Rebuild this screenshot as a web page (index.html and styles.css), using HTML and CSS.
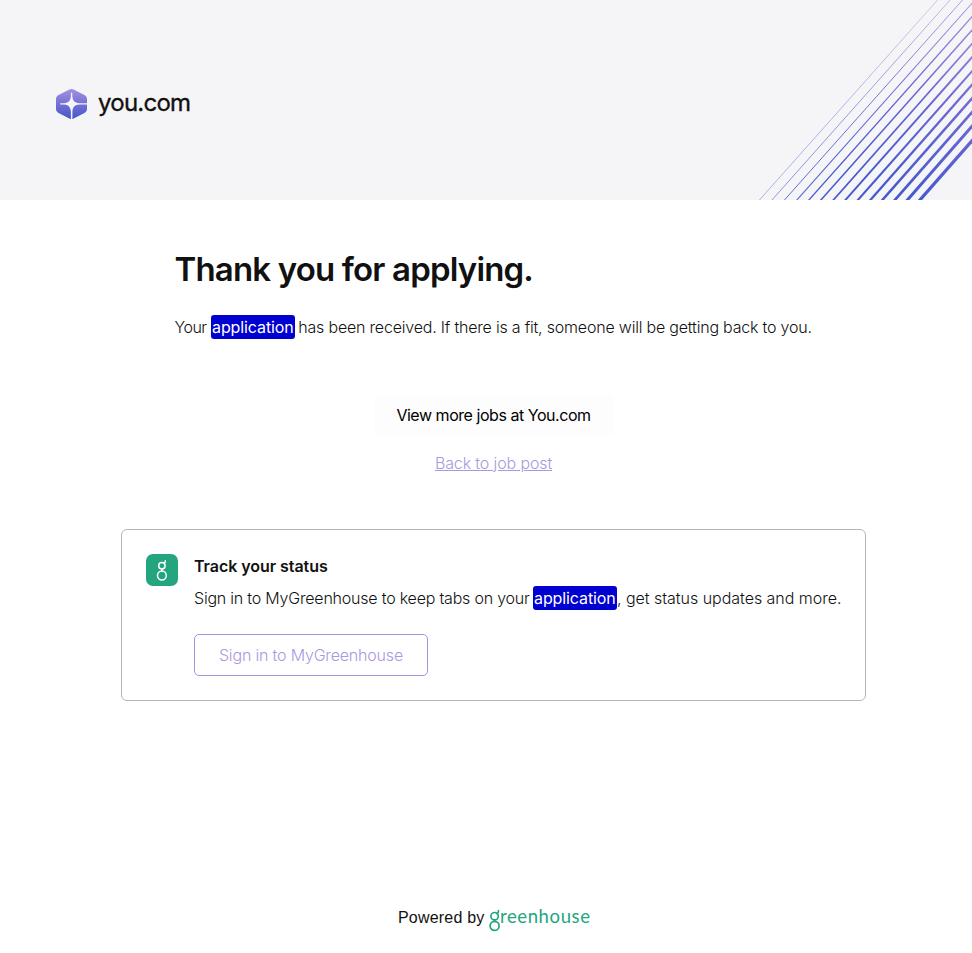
FILE: index.html
```html
<!DOCTYPE html>
<html lang="en">
<head>
<meta charset="utf-8">
<title>Thank you for applying</title>
<link rel="stylesheet" href="styles.css">
</head>
<body>
<header class="banner">
  <div class="brand">
    <svg class="brand-mark" width="32" height="32" viewBox="0 0 32 32">
      <defs><linearGradient id="mark" x1="0" y1="0" x2="0" y2="1"><stop offset="0" stop-color="#a292e0"/><stop offset=".5" stop-color="#7670d4"/><stop offset="1" stop-color="#4358cb"/></linearGradient></defs>
      <path fill="url(#mark)" d="M13.300 1.500Q15.500 .3 17.700 1.500L28.900 7.300Q31 8.400 31 10.800V21.300Q31 23.700 28.900 24.800L17.700 30.400Q15.500 31.500 13.300 30.400L2.100 24.800Q0 23.700 0 21.300V10.800Q0 8.400 2.100 7.300Z"/>
      <path fill="#f5f5f8" d="M14.900 5Q15.600 3.800 16.300 5V8C16.500 12.500 18.500 15 23.500 15.200H31.300V16.600H23.500C18.500 16.800 16.500 19.500 16.400 24V31.800H14.900V24C14.700 19.500 12.500 16.800 8 16.600H4.500Q3.500 15.900 4.500 15.200H8C12.500 15 14.700 12.500 14.900 8Z"/>
    </svg>
    <span class="brand-name">you.com</span>
  </div>
  <svg class="rays" width="222" height="200" viewBox="750 0 222 200">
    <defs><linearGradient id="ray" gradientUnits="userSpaceOnUse" x1="975" y1="0" x2="875" y2="175"><stop offset="0" stop-color="#a795e2"/><stop offset=".5" stop-color="#6c68d2"/><stop offset="1" stop-color="#465ace"/></linearGradient></defs>
    <g stroke="url(#ray)">
      <path stroke-width=".7" opacity=".6" d="M759 200.500L938 -.5"/>
      <path stroke-width=".8" opacity=".75" d="M771.500 200.500L950.500 -.5"/>
      <path stroke-width="1" opacity=".85" d="M784 200.500L963 -.5"/>
      <path stroke-width="1.100" opacity=".9" d="M796 201L974 1"/>
      <path stroke-width="1.300" d="M808 201L974 14.500"/>
      <path stroke-width="1.500" d="M820 201L974 28"/>
      <path stroke-width="1.700" d="M832.500 201L974 41.500"/>
      <path stroke-width="1.900" d="M844.500 201L974 55"/>
      <path stroke-width="2.100" d="M857 201L974 69"/>
      <path stroke-width="2.300" d="M869.500 201L974 82.500"/>
      <path stroke-width="2.500" d="M881.500 201L974 96"/>
      <path stroke-width="2.700" d="M894 201L974 110"/>
      <path stroke-width="3" d="M906.500 201L974 124"/>
      <path stroke-width="3.300" d="M919 201L974 138.500"/>
    </g>
  </svg>
</header>
<main class="content">
  <section class="confirmation">
    <h1 class="title">Thank you for applying.</h1>
    <p class="message"><span class="m-your">Your </span><mark class="hit">application</mark><span class="m-rest"> has been received. If there is a fit, someone will be getting back to you.</span></p>
    <div class="actions">
      <a class="jobs-button">View more jobs at You.com</a>
      <a class="back-link">Back to job post</a>
    </div>
  </section>
  <section class="card">
    <svg class="card-icon" width="32" height="32" viewBox="0 0 32 32">
      <rect width="32" height="32" rx="7" fill="#24a47f"/>
      <g fill="none" stroke="#fff" stroke-width="1.500"><circle cx="15.900" cy="11.700" r="3.200"/><circle cx="15.900" cy="21.500" r="4.400"/><path d="M15.900 14.900v2.200M18 9.400Q19.500 8.700 19.300 6.700" stroke-linecap="round"/></g>
    </svg>
    <div class="card-body">
      <h2 class="card-title">Track your status</h2>
      <p class="card-text"><span class="c-start">Sign in to MyGreenhouse to keep tabs on your </span><mark class="hit">application</mark><span class="c-rest">, get status updates and more.</span></p>
      <a class="signin">Sign in to MyGreenhouse</a>
    </div>
  </section>
</main>
<footer class="footer">
  <span class="powered">Powered by</span>
  <span class="greenhouse"><svg width="11" height="27" viewBox="0 0 11 27"><g fill="none" stroke="#24a47f" stroke-width="1.700"><circle cx="5.600" cy="11.200" r="3.700"/><circle cx="5.600" cy="20.900" r="4.500"/><path d="M5.600 14.900v1.500M8 8.700Q9.700 7.900 9.500 5.600" stroke-linecap="round"/></g></svg><span class="greenhouse-name">reenhouse</span></span>
</footer>
</body>
</html>
```
FILE: styles.css
```css
* { box-sizing: border-box; }
body { margin: 0; min-height: 953px; display: flex; flex-direction: column; background: #fff; color: #111; font: 400 16px/24px Inter, "Liberation Sans", sans-serif; }
h1, h2, p { margin: 0; white-space: nowrap; }
.banner { height: 200px; display: flex; justify-content: space-between; background: #f5f5f8; }
.brand { display: flex; align-items: center; height: 32px; margin: 88px 0 0 56px; }
.brand-name { margin: -2px 0 0 10px; font: 400 24px/32px Inter, sans-serif; letter-spacing: -.75px; -webkit-text-stroke: .35px #111; }
.rays { display: block; }
.content { flex: 1; padding-top: 47px; }
.confirmation { width: 638px; margin-left: 174.500px; }
.title { font-size: 33px; line-height: 44px; font-weight: 600; letter-spacing: -.83px; }
.message { margin-top: 24px; font-weight: 350; display: flex; white-space: pre; }
.m-your { width: 36.500px; letter-spacing: -.5px; }
.m-rest { margin-left: -1px; letter-spacing: -.2px; }
.hit { width: 84px; height: 24px; padding: 0 1px; border-radius: 3px; background: #0000d0; color: #fff; letter-spacing: -.1px; font-weight: 400; }
.actions { display: flex; flex-direction: column; align-items: center; margin-top: 56px; }
.jobs-button { width: 240px; height: 40px; border-radius: 6px; background: #fdfdfd; line-height: 40px; text-align: center; color: #000; letter-spacing: -.46px; }
.back-link { margin-top: 16px; color: #a998e0; text-decoration: underline; letter-spacing: -.13px; font-weight: 350; }
.card { width: 745px; height: 172px; margin: 54px 0 0 121px; padding: 24px; display: flex; border: 1px solid #b5b5b8; border-radius: 6px; }
.card-icon { flex: none; }
.card-body { margin-left: 16px; }
.card-title { font-size: 16px; line-height: 24px; font-weight: 600; letter-spacing: -.05px; }
.card-text { display: flex; margin-top: 8px; font-weight: 350; white-space: pre; }
.c-start { width: 339px; letter-spacing: -.21px; }
.c-rest { letter-spacing: -.03px; }
.signin { display: block; width: 234px; height: 42px; margin-top: 24px; border: 1px solid #a394e3; border-radius: 5px; line-height: 41px; text-align: center; color: #a998e0; font-weight: 350; letter-spacing: -.18px; }
.footer { display: flex; height: 48px; padding-left: 398px; }
.powered { width: 91px; padding-top: 1px; font: 16px/24px "Liberation Sans", sans-serif; letter-spacing: .2px; color: #111; }
.greenhouse { display: flex; color: #24a47f; }
.greenhouse-name { font: 400 18.500px/23px Lato, sans-serif; letter-spacing: .6px; }
```
